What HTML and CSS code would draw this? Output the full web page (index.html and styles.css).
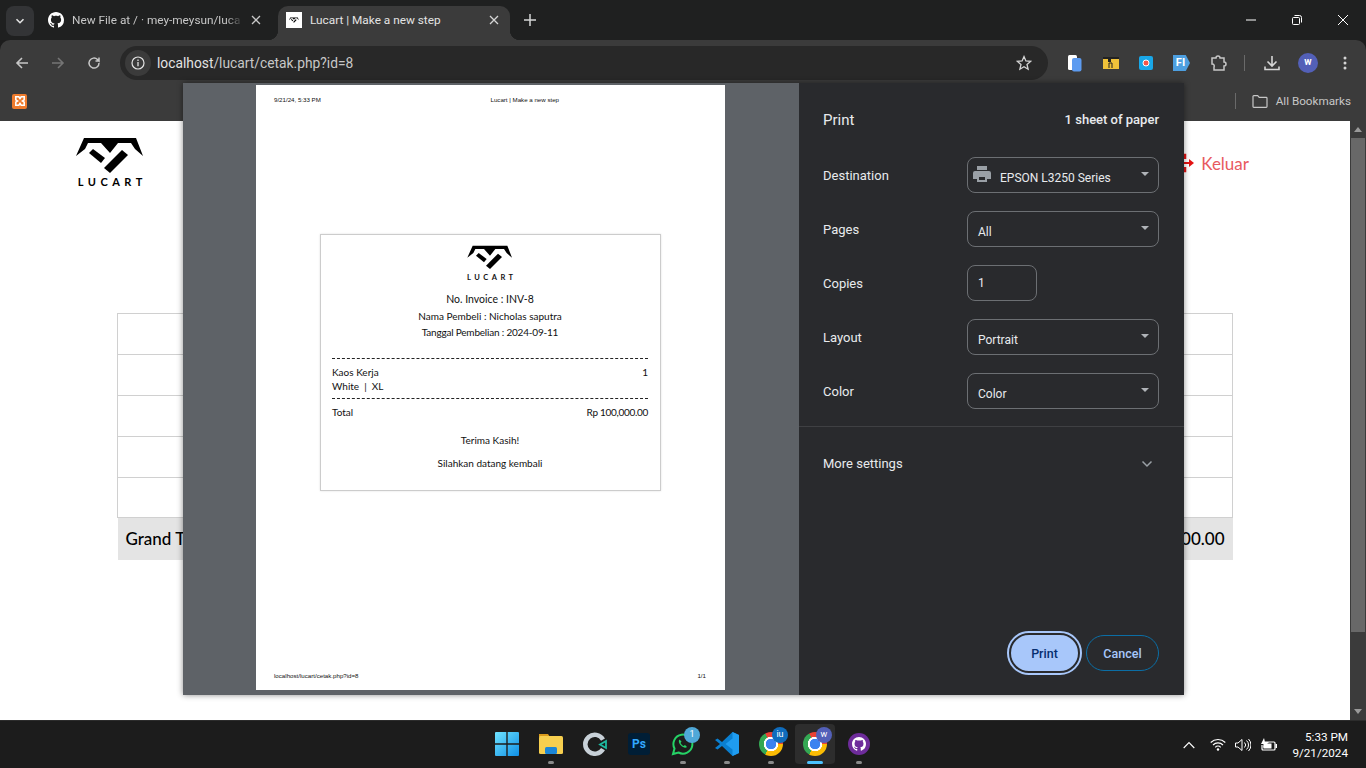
FILE: index.html
```html
<!DOCTYPE html>
<html lang="en">
<head>
    <meta charset="UTF-8">
    <meta name="viewport" content="width=device-width, initial-scale=1.0">
    <title>Lucart | Make a new step</title>
    <link rel="stylesheet" href="styles.css">
</head>
<body>
    <svg class="defs" width="0" height="0">
        <symbol id="logo-mark" viewBox="0 0 68 36">
            <polygon points="8,1 60,1 67,19 59,12 55,6 42,6 34,16 25,6 12,6 9,12 0,19"/>
            <polygon points="13,16 17,12 29,21 25,26"/>
            <polygon points="46,13 52,18 34,36 28,31"/>
        </symbol>
        <symbol id="github" viewBox="0 0 16 16">
            <path d="M8 0C3.58 0 0 3.58 0 8c0 3.54 2.29 6.53 5.47 7.59.4.07.55-.17.55-.38 0-.19-.01-.82-.01-1.49-2.01.37-2.53-.49-2.69-.94-.09-.23-.48-.94-.82-1.13-.28-.15-.68-.52-.01-.53.63-.01 1.08.58 1.23.82.72 1.21 1.87.87 2.33.66.07-.52.28-.87.51-1.07-1.78-.2-3.64-.89-3.64-3.95 0-.87.31-1.59.82-2.15-.08-.2-.36-1.02.08-2.12 0 0 .67-.21 2.2.82.64-.18 1.32-.27 2-.27.68 0 1.36.09 2 .27 1.53-1.04 2.2-.82 2.2-.82.44 1.1.16 1.92.08 2.12.51.56.82 1.27.82 2.15 0 3.07-1.87 3.75-3.65 3.95.29.25.54.73.54 1.48 0 1.07-.01 1.93-.01 2.2 0 .21.15.46.55.38A8.013 8.013 0 0016 8c0-4.42-3.58-8-8-8z"/>
        </symbol>
    </svg>

    <div class="browser">
        <!-- tab strip -->
        <div class="tabstrip">
            <div class="tab-search"><svg width="10" height="10" viewBox="0 0 10 10"><path d="M1.500 3.200 5 6.700l3.500-3.500" fill="none" stroke="#e3e3e3" stroke-width="1.600"/></svg></div>
            <div class="tab">
                <svg class="tab-icon" width="16" height="16" fill="#fff"><use href="#github"/></svg>
                <span class="tab-title tab-fade">New File at / · mey-meysun/luca</span>
                <svg class="tab-close" width="10" height="10" viewBox="0 0 10 10"><path d="M1 1l8 8M9 1l-8 8" stroke="#c7c7c7" stroke-width="1.300"/></svg>
            </div>
            <div class="tab tab-active">
                <span class="favicon"><svg width="10" height="6"><use href="#logo-mark"/></svg></span>
                <span class="tab-title">Lucart | Make a new step</span>
                <svg class="tab-close" width="10" height="10" viewBox="0 0 10 10"><path d="M1 1l8 8M9 1l-8 8" stroke="#d5d5d5" stroke-width="1.300"/></svg>
            </div>
            <svg class="new-tab" width="12" height="12" viewBox="0 0 12 12"><path d="M6 0v12M0 6h12" stroke="#d5d5d5" stroke-width="1.500"/></svg>
            <div class="window-controls">
                <svg width="10" height="10" viewBox="0 0 10 10"><path d="M0 5h10" stroke="#fff"/></svg>
                <svg width="10" height="10" viewBox="0 0 10 10"><path d="M2.500.5h5a2 2 0 0 1 2 2v5M1.500 2.500h5a1 1 0 0 1 1 1v5a1 1 0 0 1-1 1h-5a1 1 0 0 1-1-1v-5a1 1 0 0 1 1-1z" fill="none" stroke="#fff"/></svg>
                <svg width="10" height="10" viewBox="0 0 10 10"><path d="M0 0l10 10M10 0L0 10" stroke="#fff"/></svg>
            </div>
        </div>

        <!-- toolbar -->
        <div class="toolbar">
            <svg class="nav-btn" width="14" height="14" viewBox="0 0 14 14"><path d="M13 7H2M7 2 2 7l5 5" fill="none" stroke="#c7c7c7" stroke-width="1.600"/></svg>
            <svg class="nav-btn" width="14" height="14" viewBox="0 0 14 14"><path d="M1 7h11M7 2l5 5-5 5" fill="none" stroke="#757575" stroke-width="1.600"/></svg>
            <svg class="nav-btn" width="14" height="14" viewBox="0 0 14 14"><path d="M12 7a5 5 0 1 1-1.500-3.500L12 5V1.500M12 5H8.500" fill="none" stroke="#c7c7c7" stroke-width="1.500"/></svg>
            <div class="omnibox">
                <span class="site-info"><svg width="14" height="14" viewBox="0 0 14 14"><circle cx="7" cy="7" r="6" fill="none" stroke="#e3e3e3" stroke-width="1.200"/><path d="M7 6v4.200M7 3.600v1.400" stroke="#e3e3e3" stroke-width="1.300"/></svg></span>
                <span class="url"><span class="url-host">localhost</span>/lucart/cetak.php?id=8</span>
                <svg class="star" width="16" height="16" viewBox="0 0 16 16"><path d="M8 1.600l1.900 4.400 4.700.4-3.600 3.100 1.100 4.700L8 11.700l-4.100 2.500 1.100-4.700L1.400 6.400l4.700-.4z" fill="none" stroke="#d5d5d5" stroke-width="1.300"/></svg>
            </div>
            <div class="extensions">
                <svg width="16" height="18" viewBox="0 0 16 18"><rect x="1" y="1" width="9" height="15" rx="1.500" fill="#fff"/><rect x="5" y="4" width="9.500" height="13.500" rx="2" fill="#5d9bf0"/></svg>
                <svg width="16" height="12" viewBox="0 0 16 12"><rect width="16" height="12" fill="#f0c23a"/><path d="M0 0h16v2H8v3H5V2H0z" fill="#222"/><path d="M6 11V6h3v5" fill="none" stroke="#222"/></svg>
                <svg width="14" height="14" viewBox="0 0 14 14"><rect width="14" height="14" rx="2" fill="#19a7e8"/><circle cx="7" cy="7" r="3" fill="#f4574a" stroke="#fff"/></svg>
                <span class="ext-fi">FI</span>
                <svg width="17" height="17" viewBox="0 0 17 17"><path d="M2 3h4a2 2 0 0 1 4 0h4v4a2 2 0 0 1 0 4v4H4v-3a2 2 0 0 0-2-3z" fill="none" stroke="#c7c7c7" stroke-width="1.500"/></svg>
                <span class="toolbar-sep"></span>
                <svg width="16" height="16" viewBox="0 0 16 16"><path d="M8 1v10M3.500 6.500 8 11l4.500-4.500M1 11.500v3h14v-3" fill="none" stroke="#d5d5d5" stroke-width="1.600"/></svg>
                <span class="avatar">w</span>
                <svg class="menu-dots" width="4" height="14" viewBox="0 0 4 14"><circle cx="2" cy="2" r="1.500" fill="#d5d5d5"/><circle cx="2" cy="7" r="1.500" fill="#d5d5d5"/><circle cx="2" cy="12" r="1.500" fill="#d5d5d5"/></svg>
            </div>
        </div>

        <!-- bookmarks bar -->
        <div class="bookmarks">
            <span class="xampp"><svg width="12" height="12" viewBox="0 0 10 10"><path d="M1.500 1.500h2.500L5 3l1-1.500h2.500V4L7 5l1.500 1v2.500H6L5 7 4 8.500H1.500V6L3 5 1.500 4z" fill="none" stroke="#fff" stroke-width="1.300"/></svg></span>
            <span class="bookmarks-sep"></span>
            <svg width="16" height="13" viewBox="0 0 16 13"><path d="M1 1.500a.8.8 0 0 1 .8-.8h3.900l1.500 1.700h7a.8.8 0 0 1 .8.8v8.300a.8.8 0 0 1-.8.800H1.800a.8.8 0 0 1-.8-.8z" fill="none" stroke="#c7c7c7" stroke-width="1.200"/></svg>
            <span class="all-bookmarks">All Bookmarks</span>
        </div>

        <!-- page behind the dialog -->
        <div class="viewport">
            <div class="page">
                <div class="site-nav">
                    <div class="site-logo">
                        <svg width="68" height="36"><use href="#logo-mark"/></svg>
                        <span>LUCART</span>
                    </div>
                    <div class="logout">
                        <svg width="20" height="20" viewBox="0 0 20 20"><path d="M0 2h10v4M10 14v4H0" fill="none" stroke="#e31313" stroke-width="2.500"/><path d="M8 9h6V6l5 4-5 4v-3H8z" fill="#e31313"/></svg>
                        <span>Keluar</span>
                    </div>
                </div>
                <table class="cart-table">
                    <tr><td></td><td></td></tr>
                    <tr><td></td><td></td></tr>
                    <tr><td></td><td></td></tr>
                    <tr><td></td><td></td></tr>
                    <tr class="spacer-row"><td></td><td></td></tr>
                    <tr class="grand-row"><td>Grand Total</td><td class="grand-value">Rp 100,000.00</td></tr>
                </table>
            </div>
            <div class="scrollbar">
                <svg width="8" height="5" viewBox="0 0 8 5"><path d="M4 0l4 5H0z" fill="#9a9a9a"/></svg>
                <div class="scroll-thumb"></div>
                <svg width="8" height="5" viewBox="0 0 8 5"><path d="M4 5 8 0H0z" fill="#9a9a9a"/></svg>
            </div>
        </div>
    </div>

    <!-- print dialog -->
    <div class="print-dialog">
        <div class="preview">
            <div class="paper">
                <div class="paper-head">
                    <span>9/21/24, 5:33 PM</span>
                    <span class="paper-title">Lucart | Make a new step</span>
                </div>
                <div class="receipt">
                    <svg class="receipt-logo" width="46" height="24"><use href="#logo-mark"/></svg>
                    <div class="receipt-brand">LUCART</div>
                    <div class="invoice-no">No. Invoice : INV-8</div>
                    <div class="receipt-line">Nama Pembeli : Nicholas saputra</div>
                    <div class="receipt-line receipt-date">Tanggal Pembelian : 2024-09-11</div>
                    <div class="items">
                        <div class="split"><span>Kaos Kerja</span><span>1</span></div>
                        <div class="variant">White &nbsp;|&nbsp; XL</div>
                    </div>
                    <div class="split total"><span>Total</span><span class="total-value">Rp 100,000.00</span></div>
                    <div class="thanks">Terima Kasih!</div>
                    <div class="thanks">Silahkan datang kembali</div>
                </div>
                <div class="paper-foot">
                    <span>localhost/lucart/cetak.php?id=8</span>
                    <span>1/1</span>
                </div>
            </div>
        </div>
        <div class="sidebar">
            <div class="side-head">
                <span class="side-title">Print</span>
                <span class="sheet-count">1 sheet of paper</span>
            </div>
            <div class="setting">
                <label>Destination</label>
                <div class="select select-dest">
                    <svg width="18" height="16" viewBox="0 0 18 16"><path d="M4 0h10v4H4zM2 5h14a2 2 0 0 1 2 2v6h-4v3H4v-3H0V7a2 2 0 0 1 2-2zm4 6v3h6v-3z" fill="#9aa0a6"/></svg>
                    <span>EPSON L3250 Series</span>
                </div>
            </div>
            <div class="setting">
                <label>Pages</label>
                <div class="select"><span>All</span></div>
            </div>
            <div class="setting">
                <label>Copies</label>
                <div class="copies">1</div>
            </div>
            <div class="setting">
                <label>Layout</label>
                <div class="select"><span>Portrait</span></div>
            </div>
            <div class="setting">
                <label>Color</label>
                <div class="select"><span>Color</span></div>
            </div>
            <div class="more-settings">
                <span>More settings</span>
                <svg width="12" height="8" viewBox="0 0 12 8"><path d="M1.500 1.500 6 6l4.500-4.500" fill="none" stroke="#9aa0a6" stroke-width="1.500"/></svg>
            </div>
            <div class="side-actions">
                <button class="btn-print">Print</button>
                <button class="btn-cancel">Cancel</button>
            </div>
        </div>
    </div>

    <!-- windows taskbar -->
    <div class="taskbar">
        <div class="task-icons">
            <div class="task-icon">
                <svg width="24" height="24" viewBox="0 0 24 24"><defs><linearGradient id="win" x1="0" y1="0" x2="1" y2="1"><stop offset="0" stop-color="#6fe3ff"/><stop offset="1" stop-color="#0f8fe6"/></linearGradient></defs><path d="M0 1a1 1 0 0 1 1-1h10.300v11.300H0zM12.700 0H23a1 1 0 0 1 1 1v10.300H12.700zM0 12.700h11.300V24H1a1 1 0 0 1-1-1zM12.700 12.700H24V23a1 1 0 0 1-1 1H12.700z" fill="url(#win)"/></svg>
            </div>
            <div class="task-icon running">
                <svg width="24" height="24" viewBox="0 0 24 24"><path d="M0 2h9l2 3h-11z" fill="#d99a1c"/><rect y="4" width="24" height="18" rx="1.500" fill="#f7cf4f"/><rect x="6" y="15" width="12" height="7" rx="1.500" fill="#1c86d6"/></svg>
            </div>
            <div class="task-icon">
                <svg width="24" height="24" viewBox="0 0 24 24"><path d="M20 7.500A9.500 9.500 0 1 0 20 17" fill="none" stroke="#c8d1d8" stroke-width="4.500"/><path d="M23 9v7l-6-3.500z" fill="none" stroke="#1db9a0" stroke-width="1.800"/></svg>
            </div>
            <div class="task-icon">
                <span class="ps-icon">Ps</span>
            </div>
            <div class="task-icon running">
                <svg width="24" height="24" viewBox="0 0 24 24"><path d="M2 22l1.500-5.500A9.500 9.500 0 1 1 7.500 20.500z" fill="none" stroke="#25d366" stroke-width="2"/><path d="M8.500 7.500c-1.500 1.500-.5 4 1.500 6s4.500 3 6 1.500l-2-2-1.500 1c-1-.5-2.500-2-3-3l1-1.500z" fill="#25d366"/></svg>
                <span class="badge badge-wa">1</span>
            </div>
            <div class="task-icon running">
                <svg width="24" height="24" viewBox="0 0 24 24"><path d="M17.500 0 24 3v18l-6.500 3L7 14l-4.500 3.500L0 16l5-4-5-4 2.500-1.500L7 10z" fill="#0a7fd0"/><path d="M17.500 0 24 3v18l-6.500 3zM17.500 6.500 10.500 12l7 5.500z" fill="#1f9cf0" fill-rule="evenodd"/></svg>
            </div>
            <div class="task-icon running">
                <span class="chrome-icon"></span>
                <span class="badge badge-iu">iu</span>
            </div>
            <div class="task-icon task-active">
                <span class="chrome-icon"></span>
                <span class="badge badge-w">w</span>
            </div>
            <div class="task-icon running">
                <span class="gh-desktop"><svg width="14" height="14" fill="#fff"><use href="#github"/></svg></span>
            </div>
        </div>
        <div class="tray">
            <svg class="tray-chevron" width="12" height="8" viewBox="0 0 12 8"><path d="M.7 7 6 1.500 11.300 7" fill="none" stroke="#fff" stroke-width="1.100"/></svg>
            <svg width="16" height="13" viewBox="0 0 16 13"><path d="M.7 4.500a10.500 10.500 0 0 1 14.600 0M3 7a7 7 0 0 1 10 0M5.300 9.300a3.500 3.500 0 0 1 5.400 0" fill="none" stroke="#fff" stroke-width="1.100"/><circle cx="8" cy="11.500" r="1.200" fill="#fff"/></svg>
            <svg width="16" height="14" viewBox="0 0 16 14"><path d="M.5 5v4h2.500L7 12.500v-11L3 5zM9.500 4.500a3.500 3.500 0 0 1 0 5M11.500 2.500a6 6 0 0 1 0 9M13.500 1a8.500 8.500 0 0 1 0 12" fill="none" stroke="#fff"/></svg>
            <svg width="17" height="14" viewBox="0 0 17 14"><path d="M5 4h9a1 1 0 0 1 1 1v6a1 1 0 0 1-1 1H3a1 1 0 0 1-1-1V7" fill="none" stroke="#fff" stroke-width="1.200"/><rect x="15.500" y="6" width="1.500" height="4" fill="#fff"/><rect x="3.500" y="5.500" width="8" height="5" fill="#fff"/><path d="M4 0 1 6h3L3 10l6-6H5z" fill="#fff"/></svg>
            <div class="clock">
                <div>5:33 PM</div>
                <div>9/21/2024</div>
            </div>
        </div>
    </div>
</body>
</html>
```

FILE: styles.css
```css
* {
    box-sizing: border-box;
}
html, body {
    margin: 0;
    height: 768px;
    overflow: hidden;
}
body {
    position: relative;
    background-color: #1c1c1c;
    font-family: Roboto, "Noto Sans", sans-serif;
}
.defs {
    position: absolute;
}
.browser {
    height: 720px;
    display: flex;
    flex-direction: column;
}

/* tabs */
.tabstrip {
    height: 40px;
    flex: none;
    display: flex;
    align-items: flex-end;
    padding-left: 6px;
    background-color: #1f2020;
}
.tab-search {
    width: 28px;
    height: 30px;
    margin-bottom: 4px;
    margin-right: 6px;
    border-radius: 8px;
    background-color: #333436;
    display: flex;
    align-items: center;
    justify-content: center;
}
.tab {
    position: relative;
    width: 238px;
    height: 34px;
    display: flex;
    align-items: center;
    padding: 0 17px 6px 8px;
    color: #c7c7c7;
    font-size: 11.800px;
}
.tab-active {
    width: 232px;
    padding: 0 11px 6px 8px;
    border-radius: 10px 10px 0 0;
    background-color: #3b3b3b;
    color: #e3e3e3;
}
.tab-active::before, .tab-active::after {
    content: "";
    position: absolute;
    bottom: 0;
    width: 10px;
    height: 10px;
}
.tab-active::before {
    left: -10px;
    background: radial-gradient(circle at 0 0, transparent 10px, #3b3b3b 10.500px);
}
.tab-active::after {
    right: -10px;
    background: radial-gradient(circle at 100% 0, transparent 10px, #3b3b3b 10.500px);
}
.tab-icon {
    flex: none;
}
.favicon {
    width: 16px;
    height: 16px;
    flex: none;
    display: flex;
    align-items: center;
    justify-content: center;
    background-color: #fff;
}
.tab-title {
    flex: 1;
    margin-left: 8px;
    white-space: nowrap;
    overflow: hidden;
}
.tab-fade {
    -webkit-mask-image: linear-gradient(to right, #000 90%, transparent);
    mask-image: linear-gradient(to right, #000 90%, transparent);
}
.tab-close {
    flex: none;
    margin-left: 8px;
}
.new-tab {
    margin: 0 0 14px 14px;
}
.window-controls {
    margin-left: auto;
    width: 138px;
    height: 40px;
    align-self: flex-start;
    display: flex;
    align-items: center;
    justify-content: space-between;
    padding: 0 18px;
}

/* toolbar */
.toolbar {
    height: 44px;
    flex: none;
    display: flex;
    align-items: center;
    padding: 2px 15px 0;
    gap: 22px;
    background-color: #3b3b3b;
    border-radius: 10px 10px 0 0;
}
.omnibox {
    width: 928px;
    height: 34px;
    margin-left: -3px;
    display: flex;
    align-items: center;
    padding: 0 16px 0 5px;
    border-radius: 17px;
    background-color: #282828;
    color: #c7c7c7;
    font-size: 13.800px;
}
.site-info {
    width: 26px;
    height: 26px;
    border-radius: 50%;
    background-color: #3b3b3b;
    display: flex;
    align-items: center;
    justify-content: center;
}
.url {
    margin-left: 6px;
    flex: 1;
}
.url-host {
    color: #e3e3e3;
}
.extensions {
    display: flex;
    align-items: center;
    gap: 20px;
    margin-left: -3px;
}
.ext-fi {
    width: 17px;
    height: 16px;
    padding-right: 2px;
    background-color: #4d9fe0;
    color: #fff;
    font-size: 11px;
    font-weight: 700;
    line-height: 16px;
    text-align: center;
    clip-path: polygon(0 0, 75% 0, 100% 50%, 75% 100%, 0 100%);
}
.toolbar-sep {
    width: 1px;
    height: 16px;
    margin: 0 -1px 0 -3px;
    background-color: #6a6a6a;
}
.avatar {
    width: 20px;
    height: 20px;
    margin: 0 -2px;
    border-radius: 50%;
    background-color: #5360b8;
    color: #fff;
    font-size: 10px;
    font-weight: 700;
    line-height: 18px;
    text-align: center;
}
.menu-dots {
    margin-left: 7px;
}

/* bookmarks */
.bookmarks {
    height: 37px;
    flex: none;
    display: flex;
    align-items: center;
    padding: 0 15px 3px 12px;
    background-color: #3b3b3b;
    color: #c7c7c7;
    font-size: 11.700px;
}
.xampp {
    width: 15px;
    height: 15px;
    border-radius: 2px;
    background-color: #ee7b2d;
    display: flex;
    align-items: center;
    justify-content: center;
}
.bookmarks-sep {
    width: 1px;
    height: 16px;
    margin-left: auto;
    margin-right: 16px;
    background-color: #6a6a6a;
}
.all-bookmarks {
    margin-left: 8px;
}

/* page under the dialog */
.viewport {
    flex: 1;
    display: flex;
    min-height: 0;
}
.page {
    flex: 1;
    background-color: #fff;
    font-family: Lato, sans-serif;
}
.site-nav {
    height: 192px;
    display: flex;
    justify-content: space-between;
    padding: 16px 100px 0 76px;
}
.site-logo {
    width: 68px;
    display: flex;
    flex-direction: column;
    align-items: center;
}
.site-logo span {
    margin-top: 2px;
    margin-right: -4.500px;
    font-size: 11px;
    font-weight: 700;
    letter-spacing: 4.500px;
}
.logout {
    display: flex;
    align-items: center;
    height: 24px;
    margin-top: 14px;
    margin-right: 1px;
    gap: 6px;
    color: #e85a5f;
    font-size: 17px;
}
.cart-table {
    width: 1116px;
    margin-left: 117px;
    border-collapse: collapse;
    font-size: 17px;
}
.cart-table td {
    height: 41px;
    padding: 0 8px;
    border: 1px solid #d0d0d0;
}
.cart-table .spacer-row td {
    height: 40px;
}
.cart-table .grand-row td {
    height: 42px;
    border: none;
    background-color: #e4e4e4;
    font-weight: 500;
}
.grand-value {
    text-align: right;
}
.scrollbar {
    width: 16px;
    flex: none;
    display: flex;
    flex-direction: column;
    align-items: center;
    justify-content: space-between;
    padding: 6px 0;
    background-color: #3b3b3b;
}
.scroll-thumb {
    width: 14px;
    flex: none;
    height: 494px;
    margin-bottom: 77px;
    margin-top: 5px;
    background-color: #686868;
}

/* print dialog */
.print-dialog {
    position: absolute;
    left: 183px;
    top: 83px;
    width: 1001px;
    height: 612px;
    display: flex;
    box-shadow: 0 0 6px rgba(0, 0, 0, 0.45);
}
.preview {
    width: 616px;
    flex: none;
    padding: 2px 0 0 73px;
    background-color: #5e6267;
}
.paper {
    width: 469px;
    height: 605px;
    display: flex;
    flex-direction: column;
    padding: 11px 19px 11px 18px;
    background-color: #fff;
    color: #111;
    font-family: "Liberation Sans", Arial, sans-serif;
    font-size: 6.150px;
}
.paper-head {
    height: 8px;
    display: flex;
    padding-right: 147px;
    justify-content: space-between;
}
.paper-foot {
    margin-top: auto;
    display: flex;
    justify-content: space-between;
}
.receipt {
    width: 341px;
    height: 257px;
    margin: 130px 0 0 46px;
    padding: 10px 12px 0 11px;
    display: flex;
    flex-direction: column;
    align-items: center;
    border: 1px solid #ccc;
    box-shadow: 0 0 2px rgba(0, 0, 0, 0.12);
    color: #111;
    font-family: Lato, sans-serif;
    font-size: 10px;
}
.receipt-brand {
    margin-top: 4px;
    margin-right: -3.500px;
    font-size: 7.500px;
    font-weight: 700;
    letter-spacing: 3.500px;
}
.invoice-no {
    margin-top: 9px;
    margin-bottom: 1px;
    font-size: 10.500px;
    line-height: 16px;
}
.receipt-line {
    line-height: 16px;
}
.receipt-date {
    letter-spacing: -0.2px;
}
.items {
    width: 100%;
    margin-top: 18px;
    padding: 6px 0 5px;
    border-top: 1px dashed #222;
    border-bottom: 1px dashed #222;
    line-height: 14px;
}
.split {
    display: flex;
    justify-content: space-between;
}
.total {
    width: 100%;
    margin-top: 6px;
    line-height: 14px;
}
.total-value {
    letter-spacing: -0.3px;
}
.thanks {
    margin-top: 9px;
    line-height: 14px;
}
.thanks:nth-last-child(2) {
    margin-top: 14px;
}

/* print sidebar */
.sidebar {
    flex: 1;
    display: flex;
    flex-direction: column;
    padding: 0 25px 22px 24px;
    background-color: #292a2d;
    color: #e8eaed;
    font-size: 13px;
}
.side-head {
    height: 74px;
    flex: none;
    display: flex;
    justify-content: space-between;
    align-items: center;
    padding-bottom: 1px;
}
.sheet-count {
    margin-bottom: 1px;
    font-size: 13px;
    font-weight: 500;
}
.side-title {
    font-size: 15px;
}
.setting {
    height: 54px;
    flex: none;
    display: flex;
    justify-content: space-between;
}
.setting label {
    line-height: 38px;
}
.select {
    position: relative;
    width: 192px;
    height: 36px;
    display: flex;
    align-items: center;
    padding: 6px 10px 0;
    border: 1px solid #6c6f73;
    border-radius: 8px;
    font-size: 12px;
}
.select::after {
    content: "";
    position: absolute;
    right: 9px;
    top: 14px;
    border-left: 4px solid transparent;
    border-right: 4px solid transparent;
    border-top: 4px solid #b0b3b8;
}
.select-dest {
    gap: 9px;
    padding-left: 5px;
}
.select-dest svg {
    margin-top: -8px;
}
.copies {
    width: 70px;
    height: 36px;
    margin-right: 122px;
    padding: 0 10px;
    border: 1px solid #6c6f73;
    border-radius: 8px;
    font-size: 12px;
    line-height: 34px;
}
.more-settings {
    height: 74px;
    flex: none;
    display: flex;
    align-items: center;
    justify-content: space-between;
    margin: -1px -25px 0 -24px;
    padding: 0 31px 0 24px;
    border-top: 1px solid #3f4043;
}
.side-actions {
    margin-top: auto;
    display: flex;
    justify-content: flex-end;
    align-items: center;
    gap: 6px;
}
.side-actions button {
    border-radius: 20px;
    font-family: inherit;
    font-size: 12.500px;
    font-weight: 500;
}
.btn-print {
    width: 71px;
    height: 40px;
    border: 2px solid #292a2d;
    background-color: #a8c7fa;
    color: #062e6f;
    outline: 2px solid #a8c7fa;
}
.btn-cancel {
    width: 73px;
    height: 36px;
    border: 1px solid #0b6ea5;
    background-color: transparent;
    color: #a8c7fa;
}

/* taskbar */
.taskbar {
    height: 48px;
    position: relative;
    display: flex;
    align-items: center;
    justify-content: center;
    padding-bottom: 2px;
    border-top: 1px solid #2c2c2c;
    background-color: #1c1c1c;
}
.task-icons {
    display: flex;
}
.task-icon {
    position: relative;
    width: 44px;
    height: 40px;
    display: flex;
    align-items: center;
    justify-content: center;
}
.running::after, .task-active::after {
    content: "";
    position: absolute;
    bottom: 0;
    left: 19px;
    width: 6px;
    height: 3px;
    border-radius: 2px;
    background-color: #8a8a8a;
}
.task-active {
    width: 40px;
    margin: 0 2px;
    border-radius: 4px;
    background-color: #2d2d2d;
}
.task-active::after {
    left: 12px;
    width: 16px;
    background-color: #4cc2ff;
}
.ps-icon {
    width: 22px;
    height: 22px;
    border-radius: 3px;
    background-color: #001e36;
    color: #31a8ff;
    font-size: 12px;
    font-weight: 700;
    line-height: 22px;
    text-align: center;
}
.chrome-icon {
    width: 24px;
    height: 24px;
    border-radius: 50%;
    background:
        radial-gradient(circle, #3b82f0 0 5px, #fff 5.500px 7px, transparent 7.500px),
        conic-gradient(#ea4335 0 90deg, #fbbc04 90deg 210deg, #34a853 210deg 330deg, #ea4335 330deg);
}
.gh-desktop {
    width: 22px;
    height: 22px;
    border-radius: 50%;
    background-color: #6e2c9b;
    display: flex;
    align-items: center;
    justify-content: center;
}
.badge {
    position: absolute;
    top: 3px;
    left: 23px;
    width: 16px;
    height: 16px;
    border-radius: 50%;
    color: #fff;
    font-size: 9px;
    line-height: 15px;
    text-align: center;
}
.badge-wa {
    background-color: #4fa8d8;
}
.badge-iu {
    background-color: #0f6cbd;
}
.badge-w {
    left: 21px;
    background-color: #5360b8;
}
.tray {
    position: absolute;
    right: 18px;
    top: 0;
    height: 47px;
    display: flex;
    align-items: center;
    gap: 9px;
    color: #fff;
    font-size: 11.700px;
}
.tray-chevron {
    margin-right: 6px;
}
.clock {
    width: 62px;
    text-align: right;
    line-height: 16px;
}
```
